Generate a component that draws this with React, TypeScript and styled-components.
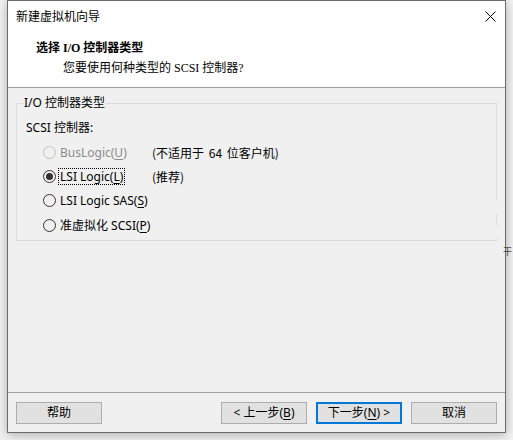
import React, { useState } from "react";
import styled, { createGlobalStyle } from "styled-components";

const GlobalStyle = createGlobalStyle`
  html, body {
    margin: 0;
    padding: 0;
    background: #f2f2f2;
  }
  body {
    font-family: "Noto Sans", "Noto Sans CJK SC", sans-serif;
    font-size: 12px;
    color: #000;
  }
  * {
    box-sizing: border-box;
  }
`;

const Page = styled.div`
  position: relative;
  height: 440px;
  padding-left: 7px;
  overflow: hidden;
`;

const Dialog = styled.div`
  width: 499px;
  height: 433px;
  border: 1px solid #6b6b6b;
  background: #f0f0f0;
  display: flex;
  flex-direction: column;
  box-shadow: 0 2px 10px rgba(0, 0, 0, 0.28);
`;

const Header = styled.div`
  background: #fff;
  height: 87px;
  border-bottom: 1px solid #a0a0a0;
`;

const TitleBar = styled.div`
  height: 29px;
  display: flex;
  align-items: center;
  justify-content: space-between;
  padding-left: 8px;
  padding-right: 9px;
  font-family: "Noto Sans CJK SC", sans-serif;
  font-size: 12px;
`;

const CloseIcon = styled.svg`
  display: block;
  margin-top: 1px;
`;

const HeaderPanel = styled.div`
  padding: 10px 0 0 28px;
`;

const Heading = styled.div`
  font-family: "Liberation Serif", "Noto Sans CJK SC", serif;
  font-weight: bold;
  font-size: 12px;
  line-height: 16px;
`;

const SubHeading = styled.div`
  margin: 4px 0 0 27px;
  font-family: "Liberation Serif", "Noto Sans CJK SC", serif;
  font-size: 12px;
  line-height: 16px;
`;

const Body = styled.div`
  flex: 1;
  padding: 7px 8px 0;
`;

const Group = styled.fieldset`
  position: relative;
  margin: 0;
  padding: 5px 9px 2px;
  border: 1px solid #dcdcdc;
  min-width: 0;
`;

const Legend = styled.legend`
  padding: 0 1px;
  margin-left: -3px;
  line-height: 16px;
`;

const BorderGap = styled.span<{ top: number; h: number }>`
  position: absolute;
  right: -1px;
  top: ${(p) => p.top}px;
  width: 1px;
  height: ${(p) => p.h}px;
  background: #f0f0f0;
`;

const FieldLabel = styled.div`
  height: 24px;
  line-height: 24px;
`;

const OptionGrid = styled.div`
  display: grid;
  grid-template-columns: 109px 1fr;
  grid-auto-rows: 24.4px;
  padding-left: 17px;
  align-items: center;
`;

const Option = styled.label<{ disabled?: boolean }>`
  display: flex;
  align-items: center;
  color: ${(p) => (p.disabled ? "#8c8c8c" : "#000")};
  white-space: nowrap;
`;

const Circle = styled.span<{ checked?: boolean; disabled?: boolean }>`
  width: 13px;
  height: 13px;
  border-radius: 50%;
  border: 1px solid ${(p) => (p.disabled ? "#c2c2c2" : "#333")};
  display: flex;
  align-items: center;
  justify-content: center;
  flex: none;

  &::after {
    content: "";
    display: ${(p) => (p.checked ? "block" : "none")};
    width: 7px;
    height: 7px;
    border-radius: 50%;
    background: #333;
  }
`;

const OptionText = styled.span<{ focused?: boolean }>`
  margin-left: 2px;
  padding: 0 1px;
  line-height: 15px;
  border: 1px dotted ${(p) => (p.focused ? "#000" : "transparent")};
`;

const Note = styled.span`
  font-family: "Noto Sans CJK SC", sans-serif;
  white-space: nowrap;
  word-spacing: 2px;
`;

const Key = styled.span`
  text-decoration: underline;
  text-underline-offset: 2px;
`;

const Footer = styled.div`
  height: 40px;
  border-top: 1px solid #a0a0a0;
  padding: 9px 8px 0;
  display: flex;
  gap: 9px;
`;

const Button = styled.button<{ primary?: boolean }>`
  width: 86px;
  height: 22px;
  padding: 0;
  background: #e1e1e1;
  border: ${(p) => (p.primary ? "2px solid #0078d7" : "1px solid #adadad")};
  font-family: "Noto Sans", "Noto Sans CJK SC", sans-serif;
  font-size: 12px;
  color: #000;
  line-height: 18px;
`;

const Spacer = styled.div`
  flex: 1;
`;

const Peek = styled.span`
  position: absolute;
  left: 503px;
  top: 246px;
  font-family: "Noto Sans CJK SC", sans-serif;
  font-size: 9px;
  line-height: 12px;
  color: #444;
`;

type Opt = { id: string; name: string; key: string; suffix?: string; note?: string; disabled?: boolean };

const options: Opt[] = [
  { id: "bus", name: "BusLogic(", key: "U", suffix: ")", note: "(不适用于 64 位客户机)", disabled: true },
  { id: "lsi", name: "LSI Logic(", key: "L", suffix: ")", note: "(推荐)" },
  { id: "sas", name: "LSI Logic SAS(", key: "S", suffix: ")" },
  { id: "pv", name: "准虚拟化 SCSI(", key: "P", suffix: ")" },
];

const App = () => {
  const [selected, setSelected] = useState("lsi");

  return (
    <>
      <GlobalStyle />
      <Page>
        <Dialog>
          <Header>
            <TitleBar>
              <span>新建虚拟机向导</span>
              <CloseIcon width="11" height="11" viewBox="0 0 11 11">
                <path d="M0.5 0.5 L10.5 10.5 M10.5 0.5 L0.5 10.5" stroke="#000" strokeWidth="1" />
              </CloseIcon>
            </TitleBar>
            <HeaderPanel>
              <Heading>选择 I/O 控制器类型</Heading>
              <SubHeading>您要使用何种类型的 SCSI 控制器?</SubHeading>
            </HeaderPanel>
          </Header>
          <Body>
            <Group>
              <Legend>I/O 控制器类型</Legend>
              <BorderGap top={89} h={14} />
              <BorderGap top={114} h={14} />
              <FieldLabel>SCSI 控制器:</FieldLabel>
              <OptionGrid>
                {options.map((o) => (
                  <React.Fragment key={o.id}>
                    <Option
                      disabled={o.disabled}
                      onClick={() => !o.disabled && setSelected(o.id)}
                    >
                      <Circle checked={selected === o.id} disabled={o.disabled} />
                      <OptionText focused={selected === o.id}>
                        {o.name}
                        <Key>{o.key}</Key>
                        {o.suffix}
                      </OptionText>
                    </Option>
                    <Note>{o.note}</Note>
                  </React.Fragment>
                ))}
              </OptionGrid>
            </Group>
          </Body>
          <Footer>
            <Button>帮助</Button>
            <Spacer />
            <Button>
              &lt; 上一步(<Key>B</Key>)
            </Button>
            <Button primary>
              下一步(<Key>N</Key>) &gt;
            </Button>
            <Button>取消</Button>
          </Footer>
        </Dialog>
        <Peek>干</Peek>
      </Page>
    </>
  );
};

export default App;
